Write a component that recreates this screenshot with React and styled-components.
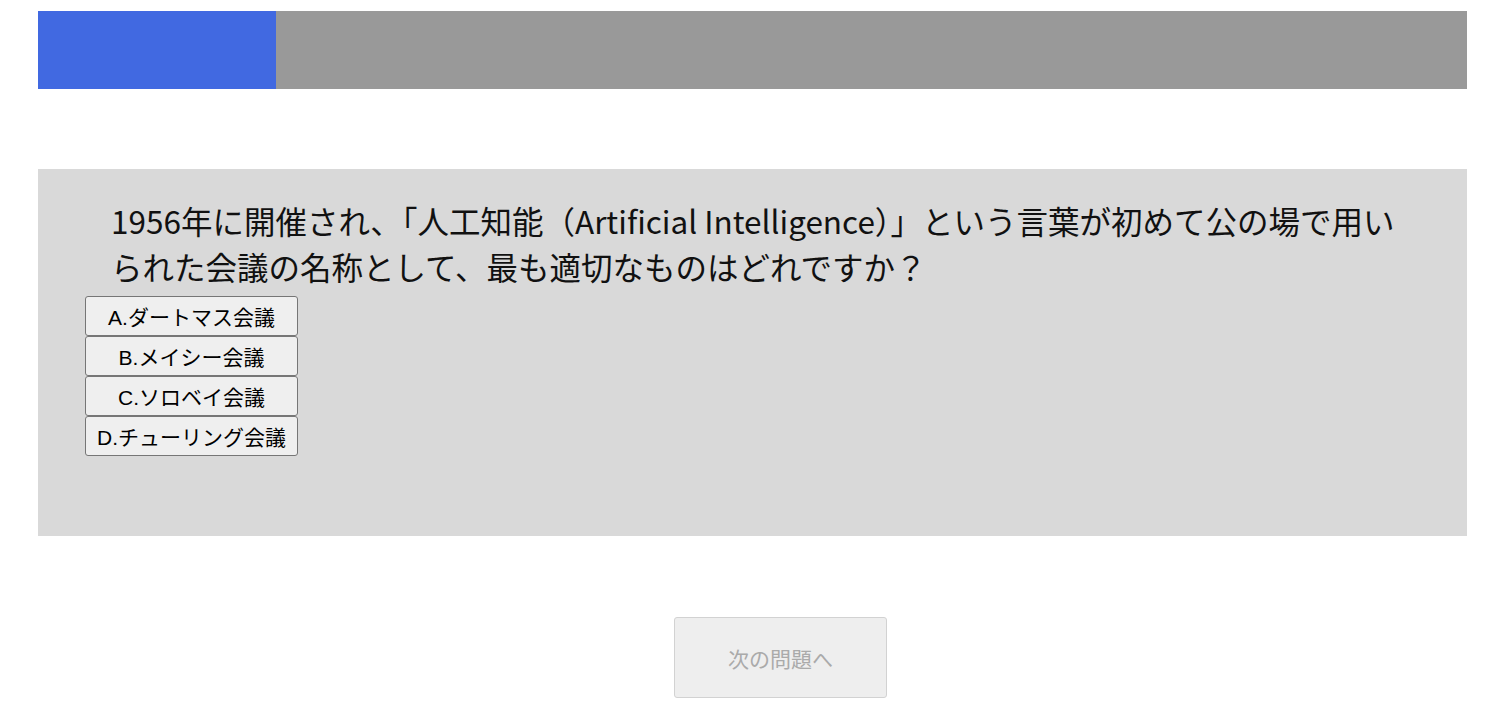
import React from 'react'
import styled, { createGlobalStyle } from 'styled-components'

const GlobalStyle = createGlobalStyle`
   body {
      margin: 0;
      background: #ffffff;
      font-family: "Noto Sans CJK JP", sans-serif;
   }
`

const Page = styled.div`
   padding: 11px 33px 0 38px;
`

const ProgressTrack = styled.div`
   display: flex;
   height: 78px;
   background: #999999;
`

const ProgressFill = styled.div`
   height: 100%;
   background: #4169e1;
`

const QuizCard = styled.section`
   margin-top: 80px;
   background: #d9d9d9;
   padding: 28px 64px 80px 47px;
   height: 367px;
   box-sizing: border-box;
`

const Question = styled.p`
   margin: 0 0 7px 26px;
   font-family: "Noto Sans CJK JP", sans-serif;
   font-size: 31.5px;
   line-height: 46px;
   color: #111111;
`

const Choices = styled.div`
   display: flex;
   flex-direction: column;
   align-items: flex-start;
`

const Choice = styled.button`
   width: 213px;
   height: 40px;
   margin: 0;
   padding: 0;
   border: 1px solid #767676;
   border-radius: 3px;
   background: #efefef;
   color: #000000;
   font-family: "Liberation Sans", "Noto Sans CJK JP", sans-serif;
   font-size: 21px;
   cursor: pointer;
`

const Footer = styled.div`
   display: flex;
   padding: 81px 0 0 636px;
`

const NextButton = styled.button`
   width: 213px;
   height: 81px;
   border: 1px solid #d2d2d2;
   border-radius: 3px;
   background: #eeeeee;
   color: #aaaaaa;
   font-family: "Noto Sans CJK JP", sans-serif;
   font-size: 21px;
`

const choices = [
   'A.ダートマス会議',
   'B.メイシー会議',
   'C.ソロベイ会議',
   'D.チューリング会議',
]

const App = () => {
   const progress = 1 / 6

   return (
      <>
         <GlobalStyle />
         <Page>
            <ProgressTrack>
               <ProgressFill style={{ width: `${progress * 100}%` }} />
            </ProgressTrack>
            <QuizCard>
               <Question>
                  1956年に開催され、「人工知能（Artificial Intelligence）」という言葉が初めて公の場で用いられた会議の名称として、最も適切なものはどれですか？
               </Question>
               <Choices>
                  {choices.map((c) => (
                     <Choice key={c}>{c}</Choice>
                  ))}
               </Choices>
            </QuizCard>
            <Footer>
               <NextButton disabled>次の問題へ</NextButton>
            </Footer>
         </Page>
      </>
   )
}

export default App
